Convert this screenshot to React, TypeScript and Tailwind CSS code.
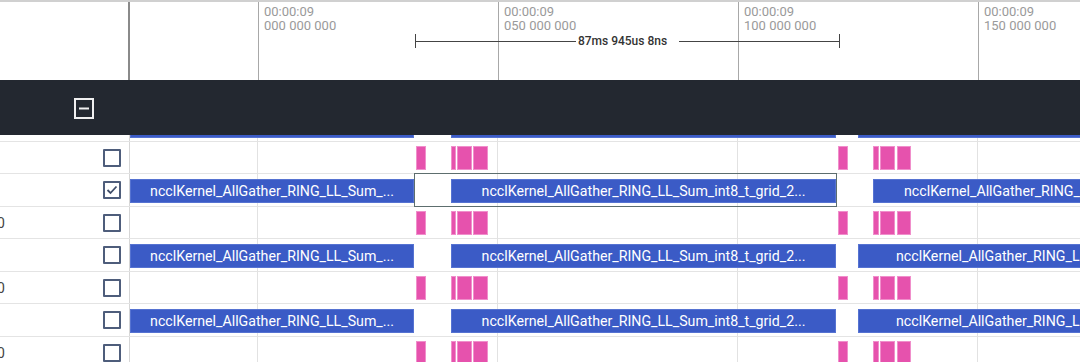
import React from "react";

type Seg = { l: number; w: number; text?: string; pad?: number; center?: boolean };

const T1 = "ncclKernel_AllGather_RING_LL_Sum_...";
const T2 = "ncclKernel_AllGather_RING_LL_Sum_int8_t_grid_2...";
const T3 = "ncclKernel_AllGather_RING_LL_Sum_int8_t_grid_2_1_1_block_64_1_1";

const barsD: Seg[] = [
  { l: 0, w: 284, text: T1, center: true },
  { l: 321, w: 385, text: T2, center: true },
  { l: 728, w: 300, text: T3, pad: 37 },
];
const barsB: Seg[] = [
  { l: 0, w: 284, text: T1, center: true },
  { l: 321, w: 385, text: T2, center: true },
  { l: 743, w: 300, text: T3, pad: 30 },
];
const pinks: Seg[] = [
  { l: 286, w: 10 },
  { l: 321, w: 5 },
  { l: 327, w: 15 },
  { l: 343, w: 15 },
  { l: 708, w: 10 },
  { l: 743, w: 6 },
  { l: 750, w: 15 },
  { l: 767, w: 14 },
];

const gridX = [127, 367, 607, 847];

function Checkbox({ checked }: { checked?: boolean }) {
  return (
    <div className="w-[18px] h-[18px] border-2 border-[#4e5d7b] rounded-[1px] bg-white flex items-center justify-center">
      {checked && (
        <svg width="12" height="10" viewBox="0 0 12 10">
          <polyline points="1.5,5 4.5,8 10.5,1.5" fill="none" stroke="#3f4d69" strokeWidth="1.8" />
        </svg>
      )}
    </div>
  );
}

function Row({
  kind,
  checked,
  left,
  selected,
  bars,
}: {
  kind: "bars" | "pink";
  checked?: boolean;
  left?: string;
  selected?: boolean;
  bars?: Seg[];
}) {
  const segs = kind === "pink" ? pinks : bars || barsD;
  return (
    <div className="h-[32.5px] shrink-0 flex border-b border-[#e4e4e4]">
      <div className="w-[130px] shrink-0 relative overflow-hidden border-r border-[#d6d6d6] flex items-center">
        {left && (
          <span className="absolute left-[-3px] top-[7px] text-[14px] leading-[18px] text-[#444]">{left}</span>
        )}
        <div className="ml-[103px] mt-[1px]">
          <Checkbox checked={checked} />
        </div>
      </div>
      <div className="flex-1 relative">
        {gridX.map((x) => (
          <div key={x} className="absolute top-0 bottom-[-1px] w-px bg-[#e2e2e2]" style={{ left: x }} />
        ))}
        {segs.map((s, i) =>
          kind === "pink" ? (
            <div
              key={i}
              className="absolute top-[4px] h-[24px] bg-[#e652ad] border border-[#f08fcb]"
              style={{ left: s.l, width: s.w }}
            />
          ) : (
            <div
              key={i}
              className={
                "absolute top-[4.5px] h-[24px] bg-[#3b5bc6] border border-[#5673d2] text-white text-[14.2px] leading-[22px] whitespace-nowrap overflow-hidden " +
                (s.center ? "text-center" : "text-left")
              }
              style={{ left: s.l, width: s.w, paddingLeft: s.pad }}
            >
              {s.text}
            </div>
          )
        )}
        {selected && (
          <div className="absolute top-[-1px] h-[33.5px] left-[284px] w-[423px] border-[1.5px] border-[#5d6e6e]" />
        )}
      </div>
    </div>
  );
}

export default function App() {
  return (
    <div
      className="w-[1080px] h-[362px] overflow-hidden bg-white flex flex-col"
      style={{ fontFamily: "Roboto, 'Liberation Sans', sans-serif" }}
    >
      {/* header */}
      <div className="h-[80px] shrink-0 flex border-t-2 border-[#d0d0d0]">
        <div className="w-[130px] shrink-0 border-r-2 border-[#8a8a8a]" />
        <div className="flex-1 relative">
          {[0, 1, 2, 3].map((i) => (
            <div key={i} className="absolute top-0 bottom-0" style={{ left: 128 + i * 240 }}>
              <div className="absolute top-0 bottom-0 left-0 w-px bg-[#a8a8a8]" />
              <div className="absolute left-[6px] top-[3px] text-[13px] leading-[13.5px] text-[#9a9a9a] whitespace-nowrap">
                <div>00:00:09</div>
                <div>{["000 000 000", "050 000 000", "100 000 000", "150 000 000"][i]}</div>
              </div>
            </div>
          ))}
          {/* measurement */}
          <div className="absolute left-[285px] w-[425px] top-[32px] h-[14px] flex items-center">
            <div className="w-px h-[14px] bg-[#444]" />
            <div className="flex-1 h-px bg-[#444]" />
            <div className="px-[2px] text-[12px] leading-[14px] font-medium text-[#333] whitespace-nowrap">
              87ms 945us 8ns
            </div>
            <div className="w-[10px]" />
            <div className="flex-1 h-px bg-[#444]" />
            <div className="w-px h-[14px] bg-[#444]" />
          </div>
        </div>
      </div>
      {/* dark band */}
      <div className="h-[55px] shrink-0 bg-[#232830] flex items-center">
        <div className="ml-[74px] mt-[2px]">
          <svg width="20" height="21" viewBox="0 0 20 21">
            <rect x="1" y="1" width="18" height="19" fill="none" stroke="#f0f0f0" strokeWidth="2" />
            <rect x="5" y="9.5" width="10" height="2" fill="#f0f0f0" />
          </svg>
        </div>
      </div>
      {/* rows */}
      <div className="flex-1 overflow-hidden">
        <div className="mt-[-26px] flex flex-col">
          <Row kind="bars" bars={barsD} />
          <Row kind="pink" />
          <Row kind="bars" checked selected bars={barsB} />
          <Row kind="pink" left="0" />
          <Row kind="bars" bars={barsD} />
          <Row kind="pink" left="0" />
          <Row kind="bars" bars={barsD} />
          <Row kind="pink" left="0" />
        </div>
      </div>
    </div>
  );
}
